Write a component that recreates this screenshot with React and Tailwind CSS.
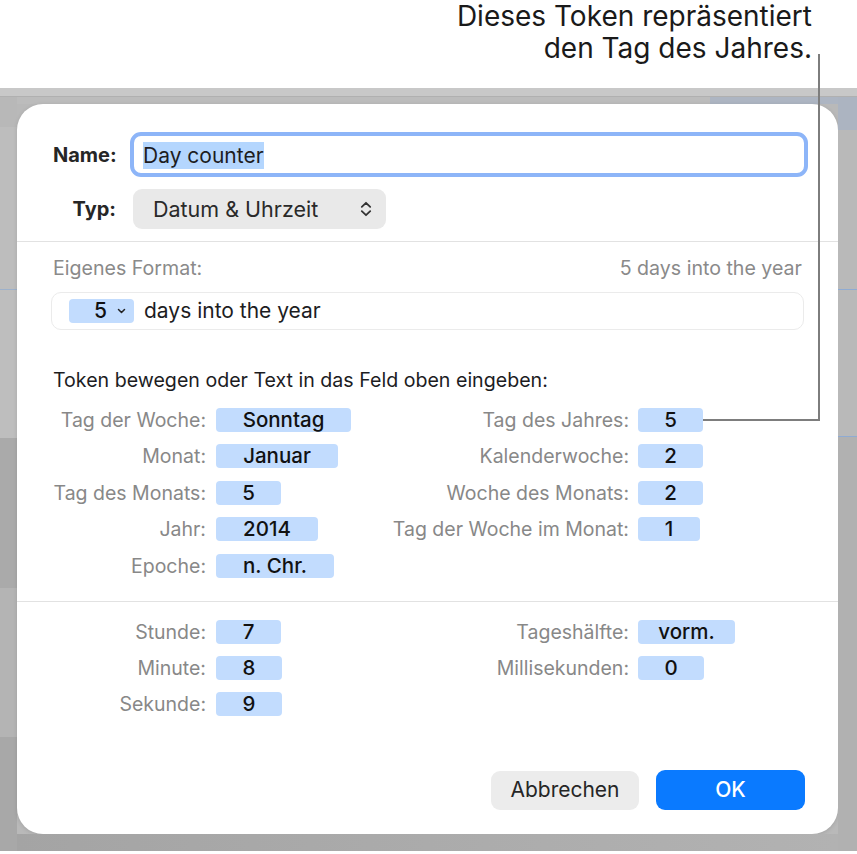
import React from "react";

function Token({ w, children }) {
  return (
    <div
      className="h-[24px] rounded-[4px] bg-[#c2dcfe] flex items-center justify-center text-[20.5px] leading-[24px] font-medium text-[#111]"
      style={{ width: w }}
    >
      {children}
    </div>
  );
}

function Label({ children }) {
  return (
    <div className="text-right text-[19.5px] leading-[24px] text-[#888888] whitespace-nowrap">
      {children}
    </div>
  );
}

function Row4({ l1, t1, w1, l2, t2, w2 }) {
  return (
    <>
      <Label>{l1}</Label>
      <div className="pl-[10px]">{t1 ? <Token w={w1}>{t1}</Token> : null}</div>
      <Label>{l2}</Label>
      <div className="pl-[9px]">{t2 ? <Token w={w2}>{t2}</Token> : null}</div>
    </>
  );
}

export default function App() {
  return (
    <div className="relative w-[857px] h-[854px] bg-white overflow-hidden font-['Inter',sans-serif]">
      {/* annotation */}
      <div className="h-[88px] pr-[45px] text-right text-[28px] leading-[32px] text-[#1a1a1a]">
        <div>Dieses Token repräsentiert</div>
        <div>den Tag des Jahres.</div>
      </div>

      {/* backdrop */}
      <div className="h-[763px] flex flex-col bg-[#b9b9b9]">
        <div className="h-[9px] bg-[#c8c8c8] border-b border-[#b0b0b0]" />
        <div className="flex flex-1">
          {/* left strip */}
          <div className="w-[17px] flex flex-col">
            <div className="h-[30px] bg-[#b8b8b8]" />
            <div className="h-[162px] bg-[#bdbdbd]" />
            <div className="h-[1px] bg-[#9db1cb]" />
            <div className="h-[148px] bg-[#bebebe]" />
            <div className="h-[150px] bg-[#aaaaaa]" />
            <div className="h-[149px] bg-[#b4b4b4]" />
            <div className="h-[114px] bg-[#a8a8a8]" />
          </div>

          {/* middle */}
          <div className="w-[821px] flex flex-col">
            <div className="h-[7px] flex">
              <div className="w-[693px] bg-[#bcbcbc]" />
              <div className="flex-1 bg-[#adb5c2]" />
            </div>

            {/* dialog */}
            <div className="h-[730px] bg-white rounded-[26px] flex flex-col shadow-[0_1px_4px_rgba(0,0,0,0.12)] text-[#1d1d1f]">
              <div className="pt-[28px] pl-[36px] pr-[30px]">
                <div className="flex items-center">
                  <div className="w-[63px] text-right font-bold text-[20px] text-[#262626]">Name:</div>
                  <div className="ml-[14px] flex-1 h-[45px] rounded-[11px] border-[4px] border-[#8db5f8] flex items-center pl-[9px] pt-[2px]">
                    <span className="bg-[#b4d6fe] text-[21px] leading-[27px] text-[#1d1d1f]">Day counter</span>
                  </div>
                </div>
                <div className="flex items-center mt-[12px]">
                  <div className="w-[63px] text-right font-bold text-[20px] text-[#262626]">Typ:</div>
                  <div className="ml-[17px] w-[253px] h-[40px] rounded-[9px] bg-[#e9e9e9] flex items-center justify-between pl-[20px] pr-[14px]">
                    <span className="text-[21.5px] text-[#2a2a2a]">Datum &amp; Uhrzeit</span>
                    <svg width="12" height="16" viewBox="0 0 12 16">
                      <path
                        d="M1.8 5.8 L6 1.8 L10.2 5.8 M1.8 10.2 L6 14.2 L10.2 10.2"
                        stroke="#333"
                        strokeWidth="1.8"
                        fill="none"
                        strokeLinecap="round"
                        strokeLinejoin="round"
                      />
                    </svg>
                  </div>
                </div>
              </div>

              <div className="mt-[12px] h-px bg-[#e2e2e2]" />

              <div className="px-[34px]">
                <div className="pt-[14px] flex justify-between text-[19.6px] leading-[24px] text-[#8a8a8a] px-[2px]">
                  <span>Eigenes Format:</span>
                  <span>5 days into the year</span>
                </div>
                <div className="mt-[12px] h-[38px] rounded-[10px] border border-[#ebebeb] flex items-center pl-[17px]">
                  <div className="w-[65px] h-[24px] rounded-[4px] bg-[#c2dcfe] flex items-center pl-[25px]">
                    <span className="text-[21px] leading-[24px] font-medium text-[#111]">5</span>
                    <svg className="ml-[10px]" width="9" height="6" viewBox="0 0 9 6">
                      <path d="M1.5 1.5 L4.5 4.5 L7.5 1.5" stroke="#222" strokeWidth="1.5" fill="none" strokeLinecap="round" strokeLinejoin="round" />
                    </svg>
                  </div>
                  <span className="ml-[10px] text-[21px] text-[#1d1d1f]">days into the year</span>
                </div>

                <div className="mt-[38px] pl-[2px] text-[19.6px] leading-[24px] text-[#1d1d1f]">
                  Token bewegen oder Text in das Feld oben eingeben:
                </div>

                <div className="mt-[16px] grid grid-cols-[155px_160px_263px_1fr] auto-rows-[24px] gap-y-[12.4px] items-center">
                  <Row4 l1="Tag der Woche:" t1="Sonntag" w1={135} l2="Tag des Jahres:" t2="5" w2={65} />
                  <Row4 l1="Monat:" t1="Januar" w1={122} l2="Kalenderwoche:" t2="2" w2={65} />
                  <Row4 l1="Tag des Monats:" t1="5" w1={65} l2="Woche des Monats:" t2="2" w2={65} />
                  <Row4 l1="Jahr:" t1="2014" w1={102} l2="Tag der Woche im Monat:" t2="1" w2={62} />
                  <Row4 l1="Epoche:" t1="n. Chr." w1={118} l2="" t2="" />
                </div>
              </div>

              <div className="mt-[23px] h-px bg-[#e2e2e2]" />

              <div className="px-[34px]">
                <div className="mt-[18px] grid grid-cols-[155px_160px_263px_1fr] auto-rows-[24px] gap-y-[12.4px] items-center">
                  <Row4 l1="Stunde:" t1="7" w1={65} l2="Tageshälfte:" t2="vorm." w2={97} />
                  <Row4 l1="Minute:" t1="8" w1={66} l2="Millisekunden:" t2="0" w2={66} />
                  <Row4 l1="Sekunde:" t1="9" w1={66} l2="" t2="" />
                </div>
              </div>

              <div className="mt-auto pb-[24px] pr-[33px] flex justify-end items-center gap-[17px]">
                <div className="w-[148px] h-[39px] rounded-[9px] bg-[#ececec] flex items-center justify-center text-[21px] text-[#262626]">
                  Abbrechen
                </div>
                <div className="w-[149px] h-[40px] rounded-[9px] bg-[#0a7aff] flex items-center justify-center text-[21px] font-medium text-white">
                  OK
                </div>
              </div>
            </div>

            <div className="flex-1 bg-gradient-to-r from-[#a4a4a4] to-[#b2b2b2]" />
          </div>

          {/* right strip */}
          <div className="w-[19px] flex flex-col">
            <div className="h-[33px] bg-[#acb4c1]" />
            <div className="h-[159px] bg-[#b9b9b9]" />
            <div className="h-[1px] bg-[#8fabd3]" />
            <div className="h-[146px] bg-[#b9b9b9]" />
            <div className="h-[1px] bg-[#8fabd3]" />
            <div className="h-[414px] bg-[#b1b1b1]" />
          </div>
        </div>
      </div>

      {/* callout line */}
      <svg className="absolute left-0 top-0 pointer-events-none" width="857" height="854">
        <polyline points="819,54 819,420 703,420" stroke="#7d7d7d" strokeWidth="2" fill="none" />
      </svg>
    </div>
  );
}
